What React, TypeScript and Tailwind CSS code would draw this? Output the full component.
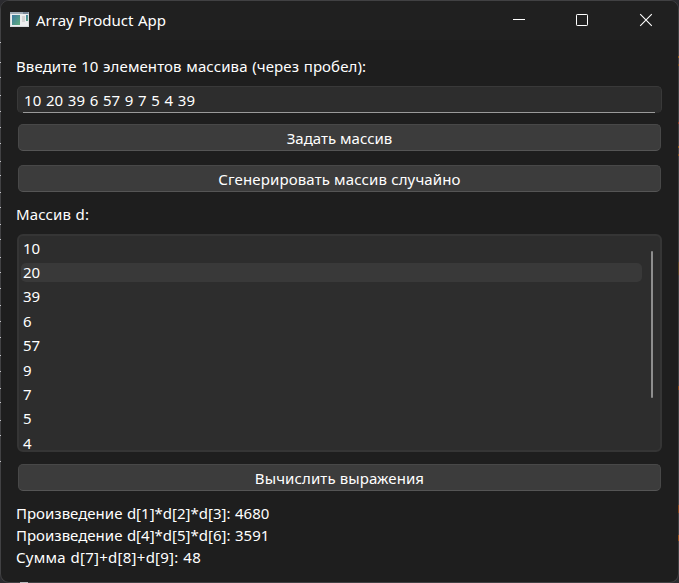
import type { ReactNode } from "react";

const items = ["10", "20", "39", "6", "57", "9", "7", "5", "4"];

const leftTicks = [42, 62, 77, 95, 111, 127, 143, 161, 175, 192, 207, 224, 239, 257, 272, 288, 305, 321, 337, 355, 371, 388, 402, 420, 435, 461];

const rightTicks = [
  { y: 56, h: 2, c: "#8a5a20" },
  { y: 64, h: 2, c: "#6d4a20" },
  { y: 122, h: 2, c: "#8a3a28" },
  { y: 146, h: 2, c: "#8a5a20" },
  { y: 154, h: 2, c: "#7a5024" },
  { y: 262, h: 13, c: "#574327" },
  { y: 386, h: 4, c: "#84481c" },
  { y: 505, h: 8, c: "#84441c" },
  { y: 535, h: 6, c: "#96501c" },
];

function AppIcon() {
  return (
    <svg width="19" height="15" viewBox="0 0 19 15" className="mt-[11px] ml-[9px] shrink-0">
      <rect width="19" height="15" fill="#d5dadd" />
      <rect width="19" height="2" fill="#9fabb5" />
      <rect x="13" y="0.5" width="5" height="1" fill="#52657c" />
      <rect x="1" y="2" width="17" height="12" fill="#eceeef" />
      <defs>
        <linearGradient id="pane" x1="0" y1="0" x2="1" y2="1">
          <stop offset="0" stopColor="#3d78a2" />
          <stop offset="1" stopColor="#5eae7c" />
        </linearGradient>
      </defs>
      <rect x="2" y="3" width="8" height="10" fill="url(#pane)" />
      <rect x="12" y="4" width="3" height="6" fill="#d5d5d5" />
      <rect x="16" y="3" width="2" height="6" fill="url(#pane)" />
    </svg>
  );
}

function PushButton({ children, className }: { children: ReactNode; className: string }) {
  return (
    <button
      className={`ml-px flex h-[27px] w-[643px] items-center justify-center rounded-[5px] border border-[#484848] border-b-[#555555] bg-[#3c3c3c] pt-px ${className}`}
    >
      {children}
    </button>
  );
}

export default function App() {
  return (
    <div className="relative h-[583px] w-[679px] overflow-hidden bg-[#2b2b2f] font-['Noto_Sans','Open_Sans',sans-serif] text-[15px] leading-[22px] whitespace-nowrap text-white [word-spacing:0.6px]">
      <div className="h-[583px] w-[679px] overflow-hidden rounded-[9px] border border-[#414143] bg-[#1e1e1e]">
        <header className="flex h-[39px] bg-[#202020]">
          <AppIcon />
          <h1 className="mt-[8px] ml-[7px]">Array Product App</h1>
          <div className="mt-3 mr-[25px] ml-auto flex gap-[50px]">
            <svg width="14" height="14" viewBox="0 0 14 14" stroke="#fff" fill="none">
              <path d="M2 6.5h12" />
            </svg>
            <svg width="14" height="14" viewBox="0 0 14 14" stroke="#fff" fill="none">
              <rect x="1.5" y="1.5" width="11" height="11" rx="0.7" />
            </svg>
            <svg width="14" height="14" viewBox="0 0 14 14" stroke="#fff" strokeWidth="1.1" fill="none">
              <path d="M1.2 1.2l11.6 11.6M12.8 1.2L1.2 12.8" />
            </svg>
          </div>
        </header>
        <main className="flex flex-col pl-4">
          <label className="-ml-px mt-[15px] tracking-[0.1px]">Введите 10 элементов массива (через пробел):</label>
          <div className="mt-[9px] flex h-[27px] w-[645px] flex-col overflow-hidden rounded-[5px] border border-b-0 border-[#393939] bg-[#2d2d2d]">
            <span className="mt-[2px] ml-[6px] h-[23px] tracking-[0.08px]">10 20 39 6 57 9 7 5 4 39</span>
            <span className="mr-[6px] ml-[5px] h-px shrink-0 bg-[#9a9a9a]" />
          </div>
          <PushButton className="mt-[11px]">Задать массив</PushButton>
          <PushButton className="mt-[14px] tracking-[0.13px]">Сгенерировать массив случайно</PushButton>
          <p className="-ml-px mt-[11px] tracking-[0.1px]">Массив d:</p>
          <div className="mt-[9px] flex h-[218px] w-[645px] overflow-hidden rounded-[6px] border-2 border-[#353535] bg-[#2d2d2d]">
            <ul className="ml-[2px] h-[214px] w-[621px]">
              {items.map((n, i) => (
                <li key={i} className="flex h-[24.4px] items-center">
                  <span className={`h-[19px] w-full rounded-[5px] pl-[2px] leading-[18px] ${i === 1 ? "bg-[#393939]" : ""}`}>{n}</span>
                </li>
              ))}
            </ul>
            <span className="mt-[15px] ml-[9px] h-[147px] w-[2px] rounded-full bg-[#8e8e8e]" />
          </div>
          <PushButton className="mt-[12px] tracking-[0.1px]">Вычислить выражения</PushButton>
          <div className="-ml-px mt-[11px] flex flex-col">
            <p>Произведение d[1]*d[2]*d[3]: 4680</p>
            <p>Произведение d[4]*d[5]*d[6]: 3591</p>
            <p className="tracking-[0.25px]">Сумма d[7]+d[8]+d[9]: 48</p>
          </div>
        </main>
      </div>
      {/* Slivers of the windows behind, visible along the frame */}
      {leftTicks.map((y) => (
        <span key={y} className="absolute left-0 h-px w-px bg-[#c4c4c8]" style={{ top: y }} />
      ))}
      {rightTicks.map((t) => (
        <span key={t.y} className="absolute right-0 w-px" style={{ top: t.y, height: t.h, background: t.c }} />
      ))}
      <span className="absolute bottom-0 left-5 h-px w-2 bg-[#b8b8bc]" />
    </div>
  );
}
